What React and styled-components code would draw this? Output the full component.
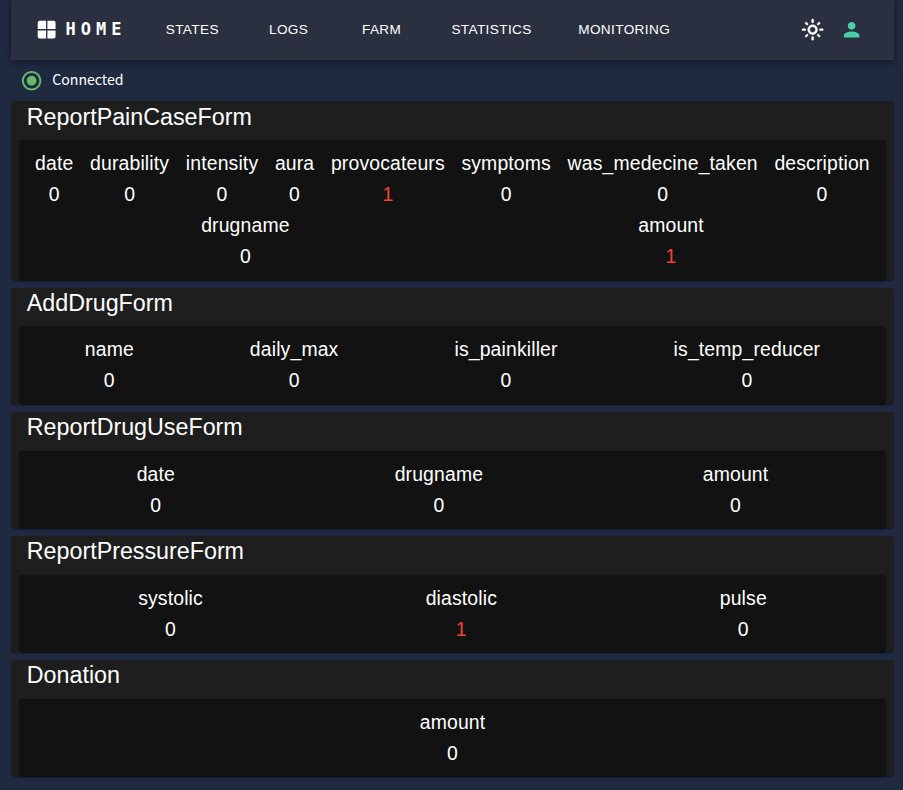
import React from 'react';
import styled, { createGlobalStyle } from 'styled-components';
import { MdOutlineLightMode, MdPerson, MdRadioButtonChecked } from 'react-icons/md';

const GlobalStyle = createGlobalStyle`
  * { box-sizing: border-box; }
  body {
    margin: 0;
    background: #1f2940;
    color: #fff;
    font-family: "Liberation Sans", Arial, sans-serif;
  }
`;

const Page = styled.div`
  min-height: 790px;
  padding: 0 9.3px 0 11.3px;
`;

const AppBar = styled.header`
  display: flex;
  align-items: center;
  height: 60.3px;
  padding: 0 30.7px 1.2px 23.5px;
  background: #2a303f;
  box-shadow: 0 2px 4px -1px rgba(0, 0, 0, 0.2), 0 4px 5px rgba(0, 0, 0, 0.14),
    0 1px 10px rgba(0, 0, 0, 0.12);
`;

const Brand = styled.a`
  display: flex;
  align-items: center;
  width: 123.2px;
  gap: 7.5px;
  padding-bottom: 0.6px;
  font: 700 17px/24px "DejaVu Sans Mono", monospace;
  letter-spacing: 5px;
`;

const Nav = styled.nav`
  display: flex;
  gap: 31px;
  flex: 1;
`;

const NavButton = styled.button`
  min-width: 62px;
  padding: 6.4px 7.76px 5.2px;
  border: 0;
  background: none;
  color: #fff;
  font: 400 13.58px/23.8px "Liberation Sans", Arial, sans-serif;
  letter-spacing: 0.388px;
  text-transform: uppercase;
`;

const Actions = styled.div`
  display: flex;
  gap: 15.5px;
`;

const Icon = styled.span`
  display: flex;
  color: ${(p) => p.$color || '#fff'};
  svg {
    width: 23.28px;
    height: 23.28px;
    stroke-width: ${(p) => p.$weight || 0};
  }
  path[fill='none'] {
    stroke: none;
  }
`;

const Status = styled.div`
  display: flex;
  align-items: center;
  height: 41px;
  padding: 0 0 1px 8.7px;
  gap: 9px;
  font: 400 14.1px/22px "Noto Sans CJK SC", sans-serif;
`;

const StatusText = styled.span`
  padding-bottom: 2px;
`;

const Cards = styled.main`
  display: flex;
  flex-direction: column;
  gap: 7.76px;
`;

const surfaceShadow = `0 2px 1px -1px rgba(0, 0, 0, 0.2), 0 1px 1px rgba(0, 0, 0, 0.14),
    0 1px 3px rgba(0, 0, 0, 0.12)`;

const Card = styled.section`
  padding: 0 7.76px;
  border-radius: 4px;
  background: #1e1e1e;
  box-shadow: ${surfaceShadow};
`;

const CardTitle = styled.h2`
  margin: 0 0 7.36px;
  padding: 0.4px 0 0 7.76px;
  font-size: 23.28px;
  font-weight: 400;
  line-height: 31.06px;
`;

const Fields = styled.div`
  display: flex;
  flex-wrap: wrap;
  justify-content: space-around;
  padding: 8.06px 7.76px 7.46px;
  border-radius: 4px;
  background: #121212;
  box-shadow: ${surfaceShadow};
`;

const Field = styled.div`
  padding: 0 7.76px;
  text-align: center;
  font-size: 19.4px;
  line-height: 31.04px;
  letter-spacing: 0.1455px;
`;

const Count = styled.div`
  color: ${(p) => (p.$active ? '#f44336' : '#fff')};
`;

const links = ['States', 'Logs', 'Farm', 'Statistics', 'Monitoring'];

const forms = [
  {
    title: 'ReportPainCaseForm',
    fields: [
      ['date', 0],
      ['durability', 0],
      ['intensity', 0],
      ['aura', 0],
      ['provocateurs', 1],
      ['symptoms', 0],
      ['was_medecine_taken', 0],
      ['description', 0],
      ['drugname', 0],
      ['amount', 1],
    ],
  },
  {
    title: 'AddDrugForm',
    fields: [['name', 0], ['daily_max', 0], ['is_painkiller', 0], ['is_temp_reducer', 0]],
  },
  { title: 'ReportDrugUseForm', fields: [['date', 0], ['drugname', 0], ['amount', 0]] },
  { title: 'ReportPressureForm', fields: [['systolic', 0], ['diastolic', 1], ['pulse', 0]] },
  { title: 'Donation', fields: [['amount', 0]] },
];

function WindowIcon() {
  return (
    <svg viewBox="0 0 24 24" fill="currentColor">
      <path d="M11.4 11.4H2.8V4.8a2 2 0 0 1 2-2h6.6zM12.8 11.4h8.4V4.8a2 2 0 0 0-2-2h-6.4zM11.4 12.8H2.8v6.4a2 2 0 0 0 2 2h6.6zM12.8 12.8h8.4v6.4a2 2 0 0 1-2 2h-6.4z" />
    </svg>
  );
}

export default function App() {
  return (
    <>
      <GlobalStyle />
      <Page>
        <AppBar>
          <Brand>
            <Icon><WindowIcon /></Icon>
            HOME
          </Brand>
          <Nav>
            {links.map((label) => (
              <NavButton key={label}>{label}</NavButton>
            ))}
          </Nav>
          <Actions>
            <Icon $weight={0.5}><MdOutlineLightMode /></Icon>
            <Icon $color="#4cceac"><MdPerson /></Icon>
          </Actions>
        </AppBar>
        <Status>
          <Icon $color="#66bb6a"><MdRadioButtonChecked /></Icon>
          <StatusText>Connected</StatusText>
        </Status>
        <Cards>
          {forms.map(({ title, fields }) => (
            <Card key={title}>
              <CardTitle>{title}</CardTitle>
              <Fields>
                {fields.map(([name, count]) => (
                  <Field key={name}>
                    <div>{name}</div>
                    <Count $active={count > 0}>{count}</Count>
                  </Field>
                ))}
              </Fields>
            </Card>
          ))}
        </Cards>
      </Page>
    </>
  );
}
